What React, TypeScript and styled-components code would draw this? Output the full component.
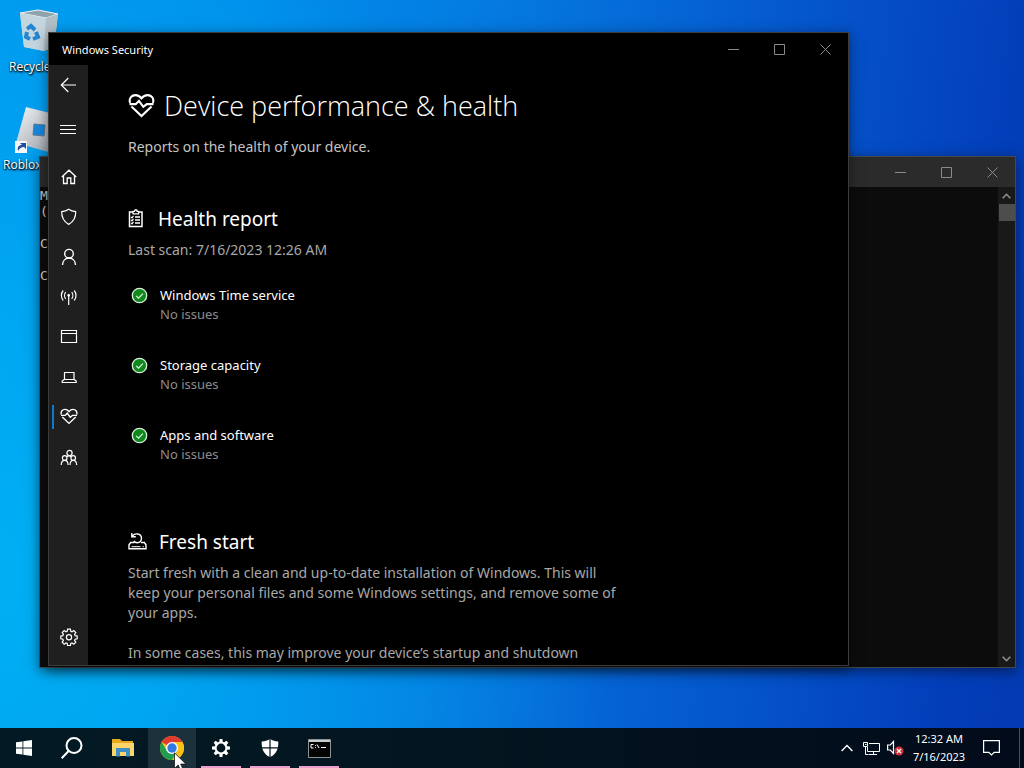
import React from "react";
import styled, { createGlobalStyle, css } from "styled-components";

const GlobalStyle = createGlobalStyle`
  *, *::before, *::after { box-sizing: border-box; }
  html, body, #root { height: 100%; }
  body {
    margin: 0;
    overflow: hidden;
    font-family: "Noto Sans", "Open Sans", sans-serif;
    color: #fff;
  }
  h1, h2, p, ul { margin: 0; padding: 0; }
  ul { list-style: none; }
  button {
    font: inherit;
    color: inherit;
    border: 0;
    padding: 0;
    background: none;
  }
  svg { display: block; }
`;

const Screen = styled.div`
  height: 100vh;
  display: flex;
  flex-direction: column;
  background:
    radial-gradient(ellipse 60% 90% at 0% 75%, rgba(0, 184, 246, 0.75), rgba(0, 170, 245, 0) 100%),
    linear-gradient(97deg, #0098ee 0%, #0090ec 22%, #0576de 48%, #055cd0 68%, #044ac4 82%, #033eb9 92%, #033ab2 100%);
`;

const Desktop = styled.main`
  position: relative;
  flex: 1;
  min-height: 0;
`;

const Shortcuts = styled.ul`
  display: flex;
  flex-direction: column;
  gap: 22px;
  width: 76px;
  padding-top: 8px;
`;

const Shortcut = styled.li`
  height: 76px;
  display: flex;
  flex-direction: column;
  gap: 2px;
`;

const ShortcutArt = styled.div`
  height: 48px;
  padding-left: 14px;
`;

const ShortcutLabel = styled.span<{ $indent: number }>`
  padding-left: ${(p) => p.$indent}px;
  font-family: "Open Sans", sans-serif;
  font-size: 12px;
  line-height: 17px;
  text-shadow: 0 1px 2px #000, 1px 1px 2px #000;
`;

const WindowFrame = styled.section<{ $inset: string; $edge: string; $fill: string }>`
  position: absolute;
  inset: ${(p) => p.$inset};
  display: flex;
  flex-direction: column;
  border: 1px solid ${(p) => p.$edge};
  background: ${(p) => p.$fill};
  box-shadow: 0 3px 12px rgba(0, 0, 0, 0.5);
  overflow: hidden;
`;

const TitleBar = styled.header<{ $height: number; $fill: string }>`
  flex: none;
  display: flex;
  align-items: center;
  height: ${(p) => p.$height}px;
  background: ${(p) => p.$fill};
`;

const WindowTitle = styled.span`
  flex: 1;
  padding-left: 13px;
  padding-top: 2px;
  font-size: 11px;
  line-height: 16px;
`;

const CaptionButton = styled.button`
  width: 46px;
  height: 100%;
  display: grid;
  place-items: center;
  color: #8a8a8a;
`;

const ConsoleBody = styled.div`
  flex: 1;
  min-height: 0;
  display: flex;
  background: #0c0c0c;
`;

const ConsoleText = styled.pre`
  flex: 1;
  margin: 0;
  padding-top: 1px;
  font-family: "DejaVu Sans Mono", "Liberation Mono", monospace;
  font-size: 13px;
  line-height: 16px;
  color: #ccc;
`;

const ScrollTrack = styled.div`
  width: 17px;
  display: flex;
  flex-direction: column;
  background: #191919;
`;

const ScrollButton = styled.button`
  height: 17px;
  display: grid;
  place-items: center;
  color: #909090;
`;

const ScrollThumb = styled.div`
  height: 17px;
  margin: 0 0 auto 1px;
  background: #4d4d4d;
`;

const WindowBody = styled.div`
  flex: 1;
  min-height: 0;
  display: flex;
`;

const Sidebar = styled.nav`
  flex: none;
  width: 39px;
  display: flex;
  flex-direction: column;
  padding-bottom: 8px;
  background: #1f1f1f;
`;

const SidebarTop = styled.div`
  display: flex;
  flex-direction: column;
  gap: 4px;
  margin-bottom: 8px;
`;

const NavButton = styled.button<{ $current?: boolean }>`
  position: relative;
  height: 40px;
  width: 100%;
  display: grid;
  place-items: center;
  ${(p) =>
    p.$current &&
    css`
      &::before {
        content: "";
        position: absolute;
        left: 3px;
        top: 8px;
        width: 2px;
        height: 24px;
        background: #0c78d0;
      }
    `}
`;

const Spacer = styled.div`
  flex: 1;
`;

const Content = styled.div`
  flex: 1;
  min-width: 0;
  padding: 21px 40px 0;
  overflow: hidden;
`;

const PageTitle = styled.h1`
  display: flex;
  align-items: center;
  gap: 9px;
  font-family: "Open Sans", "Noto Sans", sans-serif;
  font-size: 27px;
  line-height: 40px;
  font-weight: 300;
`;

const Lead = styled.p`
  margin-top: 11px;
  font-size: 14px;
  line-height: 20px;
  color: #c4c4c4;
`;

const SectionTitle = styled.h2<{ $above: number }>`
  display: flex;
  align-items: center;
  gap: 12px;
  margin-top: ${(p) => p.$above}px;
  font-size: 19px;
  line-height: 28px;
  font-weight: 400;
`;

const Note = styled.p<{ $above?: number }>`
  max-width: 500px;
  margin-top: ${(p) => p.$above ?? 7}px;
  font-size: 14px;
  line-height: 20px;
  color: #a8a8a8;
`;

const ReportList = styled.ul`
  display: flex;
  flex-direction: column;
  gap: 32px;
  margin-top: 26px;
`;

const ReportItem = styled.li`
  display: flex;
  gap: 12px;
  padding-left: 3px;
  font-size: 13px;
  line-height: 19px;
`;

const ReportState = styled.p`
  color: #8c8c8c;
`;

const Taskbar = styled.footer`
  position: relative;
  flex: none;
  height: 40px;
  display: flex;
  background: linear-gradient(90deg, #031a24 0%, #03141f 50%, #020b1a 100%);
`;

const TaskApps = styled.div`
  display: flex;
  gap: 1px;
  margin-left: 3px;
`;

const TaskButton = styled.button<{ $hover?: boolean; $running?: boolean }>`
  width: 48px;
  height: 40px;
  display: grid;
  place-items: center;
  background: ${(p) => (p.$hover ? "#1b313b" : "transparent")};
  ${(p) =>
    p.$running &&
    css`
      background: linear-gradient(#ee9fcd, #ee9fcd) center bottom / 40px 2px no-repeat;
    `}
`;

const TrayButton = styled.button<{ $width: number }>`
  width: ${(p) => p.$width}px;
  display: grid;
  place-items: center;
`;

const Clock = styled.button`
  width: 60px;
  padding-left: 4px;
  font-size: 11px;
  line-height: 18px;
  text-align: center;
  white-space: nowrap;
`;

const ShowDesktop = styled.button`
  width: 5px;
  margin-left: 4px;
  border-left: 1px solid #46505c;
`;

const Pointer = styled.svg`
  position: absolute;
  left: 174px;
  top: 24px;
`;

type IconProps = { size?: number; width?: number; children: React.ReactNode };

const Line = ({ size = 18, width = 1.2, children }: IconProps) => (
  <svg width={size} height={size} viewBox="0 0 18 18" fill="none" stroke="#fff" strokeWidth={width} aria-hidden="true">
    {children}
  </svg>
);

const heart = (
  <>
    <path d="M1.400 6.600C.3 3.400 2.700 1.400 5 1.400c1.800 0 3 .9 4 2.200 1-1.300 2.200-2.200 4-2.200 2.300 0 4.700 2 3.600 5.200" />
    <path d="M1 7.400h4.200L7.300 5.200l2.900 4L12.500 7.400H17" />
    <path d="M2.300 9 9 15.400 15.700 9" />
  </>
);

const Minimize = () => (
  <svg width="11" height="11" aria-hidden="true"><path d="M0 5.500h11" stroke="currentColor" /></svg>
);
const Maximize = () => (
  <svg width="11" height="11" fill="none" aria-hidden="true"><path d="M.5.5h10v10H.5z" stroke="currentColor" /></svg>
);
const Close = () => (
  <svg width="11" height="11" aria-hidden="true"><path d="M.5.5l10 10M10.500.5l-10 10" stroke="currentColor" /></svg>
);

const CaptionButtons = () => (
  <>
    <CaptionButton aria-label="Minimize"><Minimize /></CaptionButton>
    <CaptionButton aria-label="Maximize"><Maximize /></CaptionButton>
    <CaptionButton aria-label="Close"><Close /></CaptionButton>
  </>
);

const Check = () => (
  <svg width="17" height="19" viewBox="0 0 17 19" fill="none" aria-hidden="true">
    <circle cx="8.500" cy="9.500" r="7.200" fill="#10891c" stroke="#d8efd9" strokeWidth="1.300" />
    <path d="M5.200 9.800l2.300 2.300 4.400-4.500" stroke="#e4f5e4" strokeWidth="1.200" />
  </svg>
);

const Clipboard = () => (
  <svg width="18" height="22" viewBox="0 0 18 22" fill="none" stroke="#fff" aria-hidden="true">
    <path d="M5 4H1.500v14.500h12.500V4h-3.500" strokeWidth="1.500" />
    <path d="M5 5.800V3.400h1.500c0-2.200 2.600-2.200 2.600 0h1.500v2.400z" strokeWidth="1.300" />
    <path d="M7 9h5M7 12h5M7 15h5" strokeWidth="1.500" />
    <path d="M3 8.800l1 1L5.500 7.800M3 11.800l1 1 1.500-2M3 14.800l1 1 1.500-2" strokeWidth="1.200" />
  </svg>
);

const FreshStart = () => (
  <svg width="19" height="20" viewBox="0 0 19 20" fill="none" stroke="#fff" strokeWidth="1.400" aria-hidden="true">
    <path d="M6.500 10.500H2.700L1 12.800v4h17v-4l-1.700-2.300H13" />
    <path d="M3.500 14.700h9M14.500 14.700h1.300" strokeWidth="1" />
    <path d="M4.300 4.500C6.300.7 13.300.9 13.500 6.200c.1 2.700-1.700 4.500-4.200 4.500-1.600 0-2.800-.6-3.600-1.700M3.800 1v3.800h4" />
  </svg>
);

const RecycleBin = () => (
  <svg width="48" height="48" viewBox="0 0 48 48" aria-hidden="true">
    <path d="M6 5 24 2l20 4-4 33-10 4-20-4z" fill="#c9d5dc" />
    <path d="M6 5 24 2l20 4-12 4z" fill="#8fa3ad" stroke="#edf4f7" />
    <path d="M6 5l26 5-2 33-20-4z" fill="#c3d6e0" />
    <path d="M32 10 44 6l-4 33-10 4z" fill="#b3bfc7" />
    <g fill="none" stroke="#2385d2" strokeWidth="4">
      <path d="M13 21l4-3 4 4" />
      <path d="M22 24l2 5-5 2" />
      <path d="M16 31l-4-2 1-5" />
    </g>
  </svg>
);

const RobloxArt = () => (
  <svg width="48" height="50" viewBox="0 0 48 50" aria-hidden="true">
    <defs>
      <linearGradient id="steel" x1="0" y1="0" x2="1" y2="1">
        <stop offset="0" stopColor="#f1f3f5" />
        <stop offset="1" stopColor="#9299a2" />
      </linearGradient>
    </defs>
    <path d="M12 1l36 9-10 37L2 37z" fill="url(#steel)" />
    <path d="M20 18l11 1-1 11-11-1z" fill="#1687dc" stroke="#5d7890" />
    <path d="M1 35h12v12H1z" fill="#f5f7f9" />
    <path d="M4 45c-1-4 1-6 4-6l-2-2h6v6l-2-2c-3 0-4 1-6 4z" fill="#1d4fa4" />
  </svg>
);

const WindowsLogo = () => (
  <svg width="16" height="16" viewBox="0 0 16 16" fill="#fff" aria-hidden="true">
    <path d="M0 2.300 6.500 1.400v6.200H0zM7.300 1.300 16 0v7.600H7.300zM0 8.400h6.500v6.200L0 13.700zM7.300 8.400H16V16l-8.700-1.300z" />
  </svg>
);

const SearchIcon = () => (
  <svg width="24" height="24" viewBox="0 0 24 24" fill="none" stroke="#fff" strokeWidth="2" aria-hidden="true">
    <circle cx="14" cy="9.500" r="7.500" />
    <path d="M8.600 15 1.700 22.300" />
  </svg>
);

const Explorer = () => (
  <svg width="22" height="20" viewBox="0 0 22 20" aria-hidden="true">
    <path d="M0 1h8l2 2h11v5H0z" fill="#e8a921" />
    <path d="M0 5h22v13H0z" fill="#fbd56b" />
    <path d="M4 10h14v8.500h-4V14H8v4.500H4z" fill="#3f8fc4" />
  </svg>
);

const Chrome = () => (
  <svg width="24" height="24" viewBox="0 0 24 24" aria-hidden="true">
    <circle cx="12" cy="12" r="12" fill="#fbc116" />
    <path d="M12 12 1.600 6A12 12 0 0 1 22.400 6z" fill="#df3b2f" />
    <path d="M12 6h10.400A12 12 0 0 1 12 24l5.200-9z" fill="#fbc116" />
    <path d="M1.600 6A12 12 0 0 0 12 24l5.200-9H12L6.800 15z" fill="#1f9d50" />
    <circle cx="12" cy="12" r="6" fill="#fff" />
    <circle cx="12" cy="12" r="4.700" fill="#3179e4" />
  </svg>
);

const teeth = [0, 45, 90, 135, 180, 225, 270, 315];

const GearSolid = () => (
  <svg width="18" height="18" viewBox="0 0 18 18" aria-hidden="true">
    <circle cx="9" cy="9" r="5.400" fill="none" stroke="#fff" strokeWidth="2" />
    {teeth.map((a) => (
      <path key={a} d="M7.600 0h2.800l.4 3.500H7.200z" fill="#fff" transform={`rotate(${a} 9 9)`} />
    ))}
  </svg>
);

const ShieldSolid = () => (
  <svg width="18" height="18" viewBox="0 0 18 18" aria-hidden="true">
    <path d="M9 0c2.500 1.800 5 2.300 8.300 2.400C17.500 10 15.500 15 9 18 2.500 15 .5 10 .7 2.400 4 2.300 6.500 1.800 9 0z" fill="#fff" />
    <path d="M9 0v18M0 8.800h18" stroke="#03141f" strokeWidth="1.200" />
  </svg>
);

const ConsoleIcon = () => (
  <svg width="23" height="19" viewBox="0 0 23 19" fill="none" aria-hidden="true">
    <path d="M.5.5h22v18H.5z" fill="#050505" stroke="#8d9498" />
    <path d="M1 1h21v2H1z" fill="#c8cdd0" />
    <path d="M5.500 5.500H3v3.500h2.500M7.500 6v.8M7.500 8.200V9M9 5.500l2 3.500M13 8.500h5" stroke="#fff" />
  </svg>
);

const navItems: { label: string; icon: React.ReactNode; current?: boolean }[] = [
  {
    label: "Home",
    icon: <Line width={1.300}><path d="M1.800 9 9 2.200 16.200 9M3.500 7.500v8h3.700V10h3.600v5.500h3.700v-8" /></Line>,
  },
  {
    label: "Virus & threat protection",
    icon: <Line><path d="M8.700 1.300c2.100 1.500 4.300 2.100 7 2.300.2 6-1.800 10-7 12.800-5.200-2.800-7.200-6.800-7-12.800 2.700-.2 4.900-.8 7-2.300z" /></Line>,
  },
  {
    label: "Account protection",
    icon: <Line width={1.400}><circle cx="9" cy="5.700" r="4.300" /><path d="M2.500 17c.2-4.300 3-7 6.500-7s6.300 2.700 6.500 7" /></Line>,
  },
  {
    label: "Firewall & network protection",
    icon: (
      <Line>
        <path d="M8.700 7v10M3.200 2.500c-2.400 2.800-2.400 7.500 0 10M5.700 4.200c-1.500 1.900-1.500 4.900 0 6.600M14.200 2.500c2.400 2.800 2.400 7.500 0 10M11.700 4.200c1.500 1.900 1.500 4.900 0 6.600" />
        <circle cx="8.700" cy="7.300" r=".8" />
      </Line>
    ),
  },
  {
    label: "App & browser control",
    icon: <Line><path d="M1.500 2.500h15v12h-15zM1.500 5.500h15" /></Line>,
  },
  {
    label: "Device security",
    icon: <Line><path d="M4.500 4.500h9.500v7H4.500zM4.200 11.500 2.200 13v1.500h14V13l-2-1.500" /></Line>,
  },
  { label: "Device performance & health", icon: <Line width={1.400}>{heart}</Line>, current: true },
  {
    label: "Family options",
    icon: (
      <Line>
        <circle cx="9.500" cy="5" r="2.600" /><circle cx="4.700" cy="10" r="2.300" /><circle cx="13.200" cy="10" r="2.300" />
        <path d="M1.200 17c.1-2.900 1.400-4.600 3.500-4.600s3.300 1.700 3.400 4.600M10 17c.1-2.900 1.300-4.600 3.200-4.600s3.400 1.700 3.500 4.600M6.500 8.700c1.800-1.300 3.200-1.300 4.800 0" />
      </Line>
    ),
  },
];

const reports = ["Windows Time service", "Storage capacity", "Apps and software"];

export default function App() {
  return (
    <Screen>
      <GlobalStyle />
      <Desktop>
        <Shortcuts>
          <Shortcut>
            <ShortcutArt><RecycleBin /></ShortcutArt>
            <ShortcutLabel $indent={9}>Recycle</ShortcutLabel>
          </Shortcut>
          <Shortcut>
            <ShortcutArt><RobloxArt /></ShortcutArt>
            <ShortcutLabel $indent={3}>Roblox</ShortcutLabel>
          </Shortcut>
        </Shortcuts>

        <WindowFrame $inset="156px 8px 60px 39px" $edge="#45494d" $fill="#0c0c0c" aria-label="Console">
          <TitleBar $height={30} $fill="#2b2b2b">
            <Spacer />
            <CaptionButtons />
          </TitleBar>
          <ConsoleBody>
            <ConsoleText>{"M\n(\n\nC\n\nC"}</ConsoleText>
            <ScrollTrack>
              <ScrollButton aria-label="Scroll up">
                <svg width="9" height="6" fill="none" aria-hidden="true"><path d="M.7 5.300 4.500 1.300l3.800 4" stroke="currentColor" strokeWidth="1.600" /></svg>
              </ScrollButton>
              <ScrollThumb />
              <ScrollButton aria-label="Scroll down">
                <svg width="9" height="6" fill="none" aria-hidden="true"><path d="M.7.7l3.800 4 3.800-4" stroke="currentColor" strokeWidth="1.600" /></svg>
              </ScrollButton>
            </ScrollTrack>
          </ConsoleBody>
        </WindowFrame>

        <WindowFrame $inset="32px 175px 62px 48px" $edge="#3c3c3c" $fill="#000" aria-label="Windows Security">
          <TitleBar $height={32} $fill="#000">
            <WindowTitle>Windows Security</WindowTitle>
            <CaptionButtons />
          </TitleBar>
          <WindowBody>
            <Sidebar>
              <SidebarTop>
                <NavButton aria-label="Back"><Line><path d="M16 9H1.500M8.300 2 1.300 9l7 7" /></Line></NavButton>
                <NavButton aria-label="Menu"><Line width={1}><path d="M0 5.500h16M0 9.500h16M0 13.500h16" /></Line></NavButton>
              </SidebarTop>
              {navItems.map((item) => (
                <NavButton key={item.label} $current={item.current} aria-label={item.label}>{item.icon}</NavButton>
              ))}
              <Spacer />
              <NavButton aria-label="Settings">
                <Line>
                  <path d="M7.600 1.200h2.800l.4 2.100 1.200.5 1.800-1.200 2 2-1.200 1.800.5 1.200 2.100.4v2.800l-2.100.4-.5 1.200 1.200 1.800-2 2-1.800-1.200-1.200.5-.4 2.100H7.600l-.4-2.100-1.200-.5-1.800 1.200-2-2 1.200-1.800-.5-1.200-2.100-.4V8l2.100-.4.5-1.200-1.200-1.800 2-2L6 3.800l1.200-.5z" />
                  <circle cx="9" cy="9.300" r="2.600" />
                </Line>
              </NavButton>
            </Sidebar>
            <Content>
              <PageTitle>
                <Line size={27} width={1.400}>{heart}</Line>
                Device performance &amp; health
              </PageTitle>
              <Lead>Reports on the health of your device.</Lead>

              <SectionTitle $above={48}><Clipboard />Health report</SectionTitle>
              <Note>Last scan: 7/16/2023 12:26 AM</Note>
              <ReportList>
                {reports.map((name) => (
                  <ReportItem key={name}>
                    <Check />
                    <div>
                      <p>{name}</p>
                      <ReportState>No issues</ReportState>
                    </div>
                  </ReportItem>
                ))}
              </ReportList>

              <SectionTitle $above={64}><FreshStart />Fresh start</SectionTitle>
              <Note>
                Start fresh with a clean and up-to-date installation of Windows. This will keep your personal files and
                some Windows settings, and remove some of your apps.
              </Note>
              <Note $above={20}>In some cases, this may improve your device’s startup and shutdown</Note>
            </Content>
          </WindowBody>
        </WindowFrame>
      </Desktop>

      <Taskbar>
        <TaskButton aria-label="Start"><WindowsLogo /></TaskButton>
        <TaskButton aria-label="Search"><SearchIcon /></TaskButton>
        <TaskApps>
          <TaskButton aria-label="File Explorer"><Explorer /></TaskButton>
          <TaskButton $hover aria-label="Google Chrome"><Chrome /></TaskButton>
          <TaskButton $running aria-label="Settings"><GearSolid /></TaskButton>
          <TaskButton $running aria-label="Windows Security"><ShieldSolid /></TaskButton>
          <TaskButton $running aria-label="Command Prompt"><ConsoleIcon /></TaskButton>
        </TaskApps>
        <Spacer />
        <TrayButton $width={24} aria-label="Show hidden icons">
          <svg width="12" height="8" fill="none" aria-hidden="true"><path d="M.6 7 6 1.500 11.400 7" stroke="#fff" strokeWidth="1.400" /></svg>
        </TrayButton>
        <TrayButton $width={24} aria-label="Network">
          <svg width="17" height="15" fill="none" stroke="#fff" aria-hidden="true">
            <path d="M6 2.500h10.500v8H4.500V6M10.500 10.500v3M6 13.500h8M2.500 6v7.500h3M.5 1.500h4v4h-4z" />
            <path d="M2 3.500h1.500" />
          </svg>
        </TrayButton>
        <TrayButton $width={24} aria-label="Volume muted">
          <svg width="17" height="16" fill="none" aria-hidden="true">
            <path d="M.6 5h2.700L6.500 1.500v12L3.300 10H.6z" stroke="#fff" strokeWidth="1.200" />
            <circle cx="12" cy="11" r="4.500" fill="#cf3038" />
            <path d="M10 9l4 4M14 9l-4 4" stroke="#fff" strokeWidth="1.200" />
          </svg>
        </TrayButton>
        <Clock>12:32 AM<br />7/16/2023</Clock>
        <TrayButton $width={48} aria-label="Notifications">
          <svg width="17" height="16" fill="none" aria-hidden="true"><path d="M.6.6h15.800v11.800h-5.200L8.500 15l-2.700-2.600H.6z" stroke="#fff" strokeWidth="1.200" /></svg>
        </TrayButton>
        <ShowDesktop aria-label="Show desktop" />
        <Pointer width="13" height="20" viewBox="0 0 13 20" aria-hidden="true">
          <path d="M.5.8v15.700l3.700-3.500 2.600 6 2.500-1.100-2.600-5.800h5.200z" fill="#fff" stroke="#111" strokeWidth=".8" />
        </Pointer>
      </Taskbar>
    </Screen>
  );
}
